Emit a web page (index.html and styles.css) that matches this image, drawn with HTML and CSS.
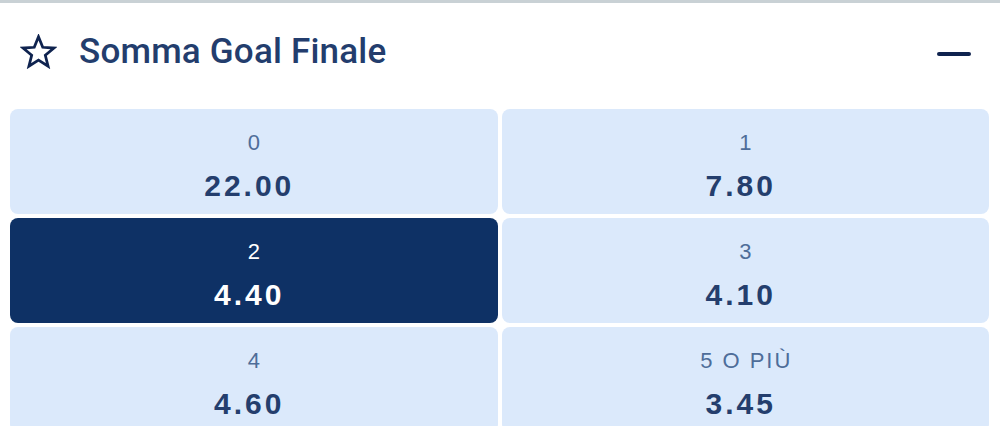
FILE: index.html
```html
<!DOCTYPE html>
<html lang="it">
<head>
<meta charset="utf-8">
<link rel="stylesheet" href="styles.css">
</head>
<body>
<div class="market">
  <div class="header">
    <div class="title-wrap">
      <svg class="star" viewBox="0 0 40 38" width="37" height="35">
        <polygon points="20,3 24.6,14.4 36.8,15.2 27.4,23.1 30.4,35 20,28.4 9.6,35 12.6,23.1 3.2,15.2 15.4,14.4" fill="none" stroke="#0f234f" stroke-width="3" stroke-linejoin="miter"/>
      </svg>
      <span class="title">Somma Goal Finale</span>
    </div>
    <span class="minus"></span>
  </div>
  <div class="grid">
    <div class="cell"><span class="label">0</span><span class="odds">22.00</span></div>
    <div class="cell"><span class="label">1</span><span class="odds">7.80</span></div>
    <div class="cell selected"><span class="label">2</span><span class="odds">4.40</span></div>
    <div class="cell"><span class="label">3</span><span class="odds">4.10</span></div>
    <div class="cell"><span class="label">4</span><span class="odds">4.60</span></div>
    <div class="cell"><span class="label">5 O PIÙ</span><span class="odds">3.45</span></div>
  </div>
</div>
</body>
</html>
```

FILE: styles.css
```css
html, body {
  margin: 0;
  padding: 0;
  background: #ffffff;
  overflow: hidden;
}
body {
  font-family: "Liberation Sans", Arial, sans-serif;
  width: 1000px;
  height: 426px;
}
.market {
  border-top: 3px solid #c9d1d5;
}
.header {
  height: 106px;
  display: flex;
  align-items: center;
  justify-content: space-between;
  padding: 0 29px 0 20px;
}
.title-wrap {
  display: flex;
  align-items: center;
  gap: 22px;
  margin-top: -10px;
}
.star {
  display: block;
}
.title {
  font-family: Roboto, "Liberation Sans", sans-serif;
  font-size: 35px;
  font-weight: 500;
  color: #233d6d;
  letter-spacing: 0.2px;
}
.minus {
  display: block;
  width: 34px;
  height: 4px;
  border-radius: 2px;
  background: #0f234f;
  margin-top: -5px;
}
.grid {
  display: grid;
  grid-template-columns: 1fr 1fr;
  grid-auto-rows: 105px;
  gap: 4px;
  padding: 0 11px 0 10px;
}
.cell {
  background: #dbe9fb;
  border-radius: 8px;
  display: flex;
  flex-direction: column;
  align-items: center;
  padding-top: 22px;
  box-sizing: border-box;
}
.label {
  font-size: 22px;
  line-height: 24px;
  color: #4e6d99;
  letter-spacing: 2px;
  margin-right: -2px;
}
.odds {
  margin-top: 14px;
  font-size: 30px;
  line-height: 34px;
  font-weight: 700;
  color: #243e6d;
  letter-spacing: 3px;
  margin-right: 9px;
}
.selected {
  background: #0e3165;
}
.selected .label,
.selected .odds {
  color: #ffffff;
}
```
